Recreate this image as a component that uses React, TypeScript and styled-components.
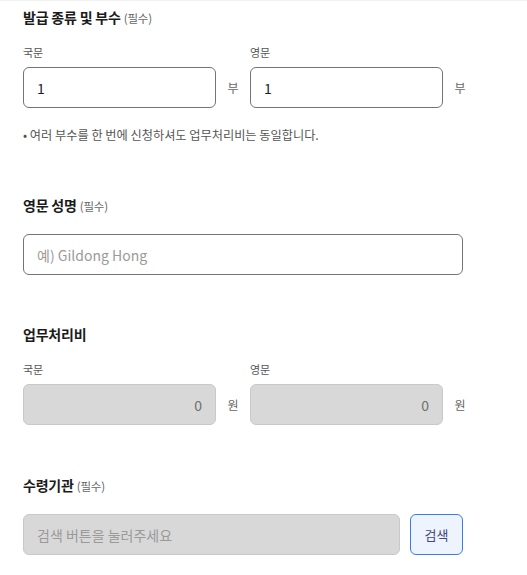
import React from 'react';
import styled, { createGlobalStyle } from 'styled-components';

const GlobalStyle = createGlobalStyle`
  html, body {
    margin: 0;
    padding: 0;
    background: #fff;
  }
  body {
    font-family: "Noto Sans CJK KR", "Noto Sans", sans-serif;
    color: #1b1b1b;
  }
  * { box-sizing: border-box; }
`;

const Page = styled.div`
  width: 527px;
  min-height: 575px;
  padding: 6px 0 0 23px;
  border-top: 1px solid #f1f1f1;
  display: flex;
  flex-direction: column;
`;

const Section = styled.section<{ $gap?: number }>`
  display: flex;
  flex-direction: column;
  margin-bottom: ${(p) => p.$gap ?? 50}px;
`;

const Title = styled.h2<{ $space: number }>`
  display: flex;
  align-items: baseline;
  height: 20px;
  margin: 0 0 ${(p) => p.$space}px;
  font-size: 14px;
  line-height: 20px;
  font-weight: 700;
  color: #1b1b1b;
  letter-spacing: -0.2px;
`;

const Required = styled.span`
  font-size: 11.5px;
  line-height: 20px;
  font-weight: 400;
  color: #666;
  margin-left: 3px;
`;

const Row = styled.div`
  display: flex;
  align-items: flex-end;
`;

const Field = styled.div`
  display: flex;
  flex-direction: column;
  gap: 7px;
`;

const Label = styled.label`
  display: block;
  height: 16px;
  font-size: 11px;
  line-height: 16px;
  color: #555;
`;

const InputLine = styled.div`
  display: flex;
  align-items: center;
`;

const Input = styled.input<{ $w: number; $align?: 'left' | 'right' }>`
  display: block;
  width: ${(p) => p.$w}px;
  height: 41px;
  padding: 0 13px;
  border: 1px solid #747474;
  border-radius: 6px;
  background: #fff;
  font-family: "Noto Sans CJK KR", "Noto Sans", sans-serif;
  font-size: 14px;
  color: #1d1d2a;
  text-align: ${(p) => p.$align ?? 'left'};
  outline: none;

  &::placeholder {
    color: #9a9a9a;
  }

  &:read-only {
    background: #d8d8d8;
    border-color: #c9c9c9;
    color: #6f6f6f;
  }
`;

const Unit = styled.span`
  width: 34px;
  text-align: center;
  font-size: 12px;
  color: #666;
`;

const Note = styled.p`
  margin: 18px 0 0;
  height: 18px;
  font-size: 12.2px;
  line-height: 18px;
  color: #555;
`;

const SearchRow = styled.div`
  display: flex;
  gap: 10px;
`;

const SearchButton = styled.button`
  width: 53px;
  height: 41px;
  border: 1px solid #3a7be8;
  border-radius: 6px;
  background: #eef4fe;
  color: #45477a;
  font-family: "Noto Sans CJK KR", "Noto Sans", sans-serif;
  font-size: 13px;
  cursor: pointer;
`;

type CountProps = { label: string; value: string; unit: string; fee?: boolean };

const CountField = ({ label, value, unit, fee }: CountProps) => (
  <Field>
    <Label>{label}</Label>
    <InputLine>
      <Input $w={193} $align={fee ? 'right' : 'left'} defaultValue={value} readOnly={fee} />
      <Unit>{unit}</Unit>
    </InputLine>
  </Field>
);

export default function App() {
  return (
    <>
      <GlobalStyle />
      <Page>
        <Section $gap={51}>
          <Title $space={17}>
            발급 종류 및 부수<Required>(필수)</Required>
          </Title>
          <Row>
            <CountField label="국문" value="1" unit="부" />
            <CountField label="영문" value="1" unit="부" />
          </Row>
          <Note>• 여러 부수를 한 번에 신청하셔도 업무처리비는 동일합니다.</Note>
        </Section>

        <Section $gap={49}>
          <Title $space={19}>
            영문 성명<Required>(필수)</Required>
          </Title>
          <Input $w={440} placeholder="예) Gildong Hong" />
        </Section>

        <Section $gap={50}>
          <Title $space={17}>업무처리비</Title>
          <Row>
            <CountField label="국문" value="0" unit="원" fee />
            <CountField label="영문" value="0" unit="원" fee />
          </Row>
        </Section>

        <Section $gap={20}>
          <Title $space={19}>
            수령기관<Required>(필수)</Required>
          </Title>
          <SearchRow>
            <Input $w={377} placeholder="검색 버튼을 눌러주세요" readOnly />
            <SearchButton type="button">검색</SearchButton>
          </SearchRow>
        </Section>
      </Page>
    </>
  );
}
